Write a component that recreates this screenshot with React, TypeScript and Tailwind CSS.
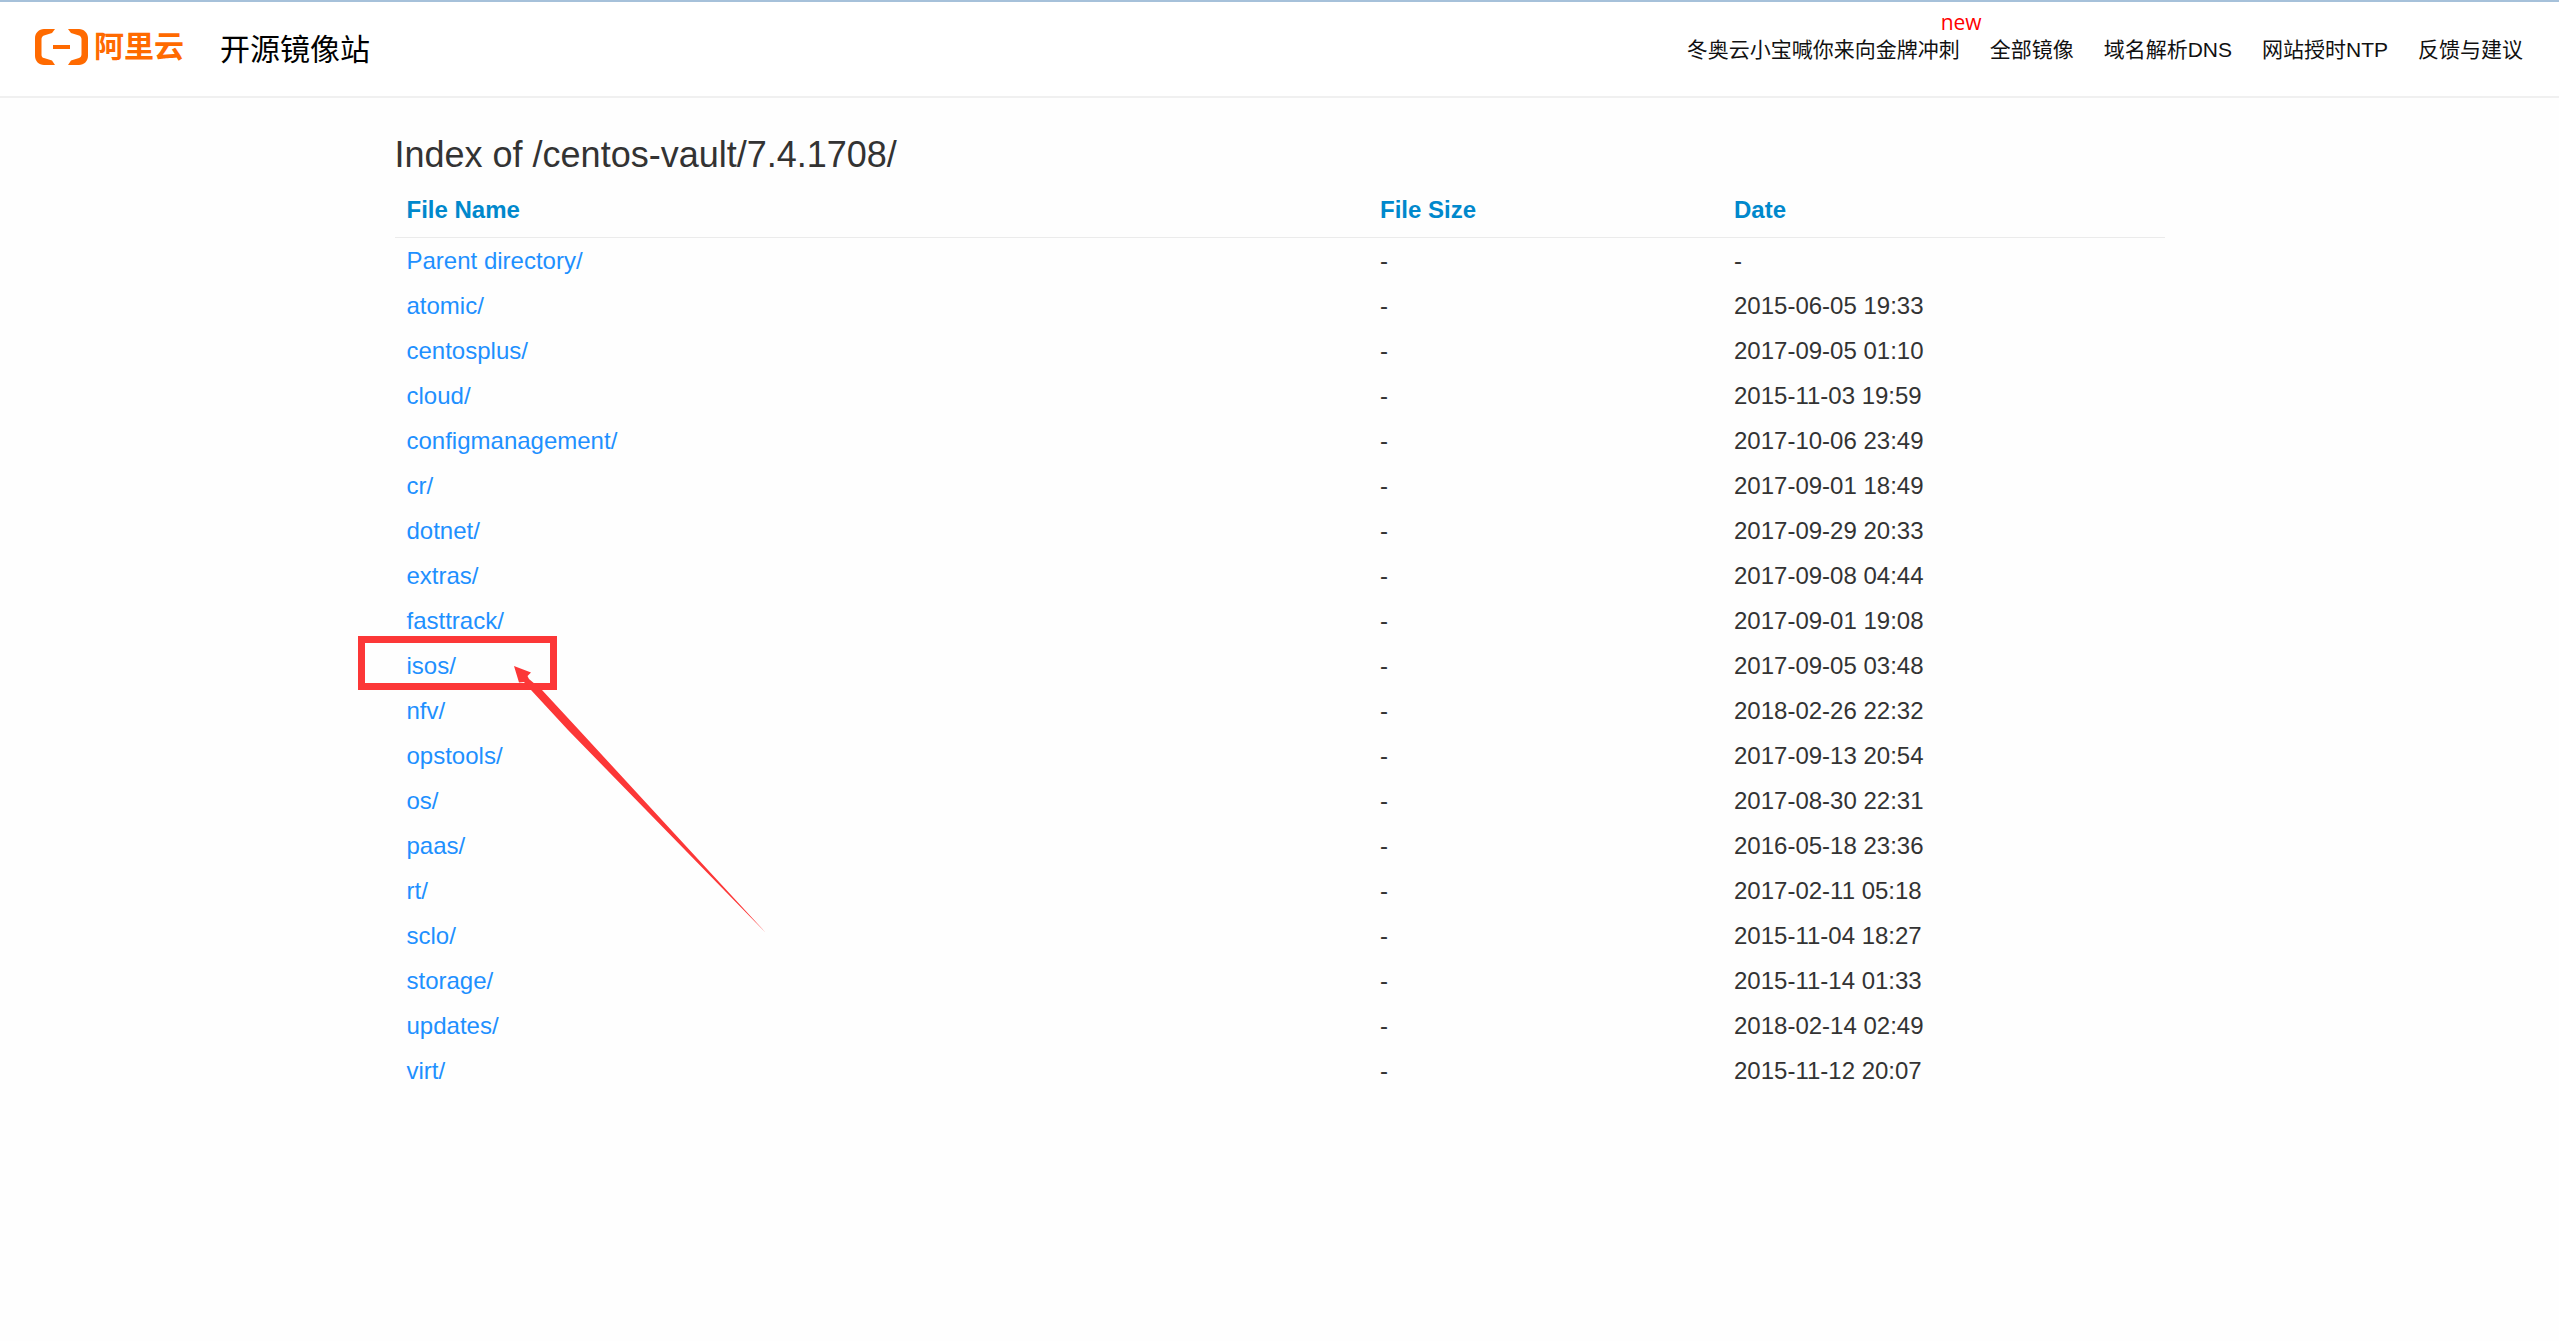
import React from "react";

type Entry = {
  name: string;
  size: string;
  date: string;
};

const navLinks = [
  { label: "冬奥云小宝喊你来向金牌冲刺", isNew: true },
  { label: "全部镜像" },
  { label: "域名解析DNS" },
  { label: "网站授时NTP" },
  { label: "反馈与建议" },
];

const entries: Entry[] = [
  { name: "Parent directory/", size: "-", date: "-" },
  { name: "atomic/", size: "-", date: "2015-06-05 19:33" },
  { name: "centosplus/", size: "-", date: "2017-09-05 01:10" },
  { name: "cloud/", size: "-", date: "2015-11-03 19:59" },
  { name: "configmanagement/", size: "-", date: "2017-10-06 23:49" },
  { name: "cr/", size: "-", date: "2017-09-01 18:49" },
  { name: "dotnet/", size: "-", date: "2017-09-29 20:33" },
  { name: "extras/", size: "-", date: "2017-09-08 04:44" },
  { name: "fasttrack/", size: "-", date: "2017-09-01 19:08" },
  { name: "isos/", size: "-", date: "2017-09-05 03:48" },
  { name: "nfv/", size: "-", date: "2018-02-26 22:32" },
  { name: "opstools/", size: "-", date: "2017-09-13 20:54" },
  { name: "os/", size: "-", date: "2017-08-30 22:31" },
  { name: "paas/", size: "-", date: "2016-05-18 23:36" },
  { name: "rt/", size: "-", date: "2017-02-11 05:18" },
  { name: "sclo/", size: "-", date: "2015-11-04 18:27" },
  { name: "storage/", size: "-", date: "2015-11-14 01:33" },
  { name: "updates/", size: "-", date: "2018-02-14 02:49" },
  { name: "virt/", size: "-", date: "2015-11-12 20:07" },
];

const HIGHLIGHTED = "isos/";

const Logo = () => (
  <a href="#" className="flex items-center gap-1.5 text-[#ff6a00]">
    <svg width="53" height="36" viewBox="0 0 53 36" fill="currentColor" aria-hidden="true">
      <path d="M20 0H9C4 0 0 4 0 9v18c0 5 4 9 9 9h11l-3-4.500-8-2.500C7.500 29 6.500 27.500 6.500 26V10c0-1.500 1-3 2.500-3.500L17 4z" />
      <path d="M33 0h11c5 0 9 4 9 9v18c0 5-4 9-9 9H33l3-4.500 8-2.500c1.500-.5 2.500-2 2.500-3.500V10c0-1.500-1-3-2.500-3.500L36 4z" />
      <path d="M18 16h17v4H18z" />
    </svg>
    <span className="text-[30px] leading-9 font-bold">阿里云</span>
  </a>
);

const Header = () => (
  <header className="flex items-center justify-between border-t-2 border-b-2 border-t-[#a6c1da] border-b-[#f0f0f0] bg-white pr-9 pb-1 pl-[35px] h-[98px]">
    <div className="flex items-center gap-9">
      <Logo />
      <span className="pt-1.5 text-[30px] leading-9 text-black">开源镜像站</span>
    </div>
    <nav className="flex items-center gap-[30px] pt-1.5 text-[21px] leading-8 text-[#111111]">
      {navLinks.map((link) => (
        <a key={link.label} href="#" className="relative hover:text-[#ff6a00]">
          {link.label}
          {link.isNew && (
            <span className="absolute -top-7 -right-[22px] font-['Open_Sans',sans-serif] text-[#ff0000]">
              new
            </span>
          )}
        </a>
      ))}
    </nav>
  </header>
);

// Red frame with an arrow pointing at the directory to open
const Marker = () => (
  <>
    <span className="absolute -top-1.5 -left-[37px] h-[54px] w-[199px] border-7 border-[#fc3737] pointer-events-none" />
    <svg
      className="absolute top-6 left-[119px] pointer-events-none"
      width="252"
      height="267"
      viewBox="0 0 252 267"
      fill="#fc3737"
      aria-hidden="true"
    >
      <path d="M0 0L17 6.500 13.500 10 15 13 28 24 65 64 252 267 54 64 17 24 10 16 5 16.500z" />
    </svg>
  </>
);

const App: React.FC = () => {
  return (
    <div className="min-h-screen bg-[#fefefe] font-['Liberation_Sans','Noto_Sans_CJK_SC',sans-serif] text-[#333333]">
      <Header />
      <main className="mx-auto max-w-[1770px] pt-[33px]">
        <h1 className="text-4xl leading-12">Index of /centos-vault/7.4.1708/</h1>
        <table className="w-full table-fixed text-2xl leading-9 text-left">
          <thead>
            <tr className="h-[58px] border-b border-[#ebebeb] text-[#0088cc]">
              <th className="w-[55%] px-3 pt-1 font-bold">File Name</th>
              <th className="w-[20%] px-3 pt-1 font-bold">File Size</th>
              <th className="w-[25%] px-3 pt-1 font-bold">Date</th>
            </tr>
          </thead>
          <tbody>
            {entries.map((entry) => (
              <tr key={entry.name} className="h-[45px]">
                <td className="relative px-3 pt-0.5">
                  <a href="#" className="text-[#1e90ff] hover:underline">
                    {entry.name}
                  </a>
                  {entry.name === HIGHLIGHTED && <Marker />}
                </td>
                <td className="px-3 pt-0.5">{entry.size}</td>
                <td className="px-3 pt-0.5">{entry.date}</td>
              </tr>
            ))}
          </tbody>
        </table>
      </main>
    </div>
  );
};

export default App;
